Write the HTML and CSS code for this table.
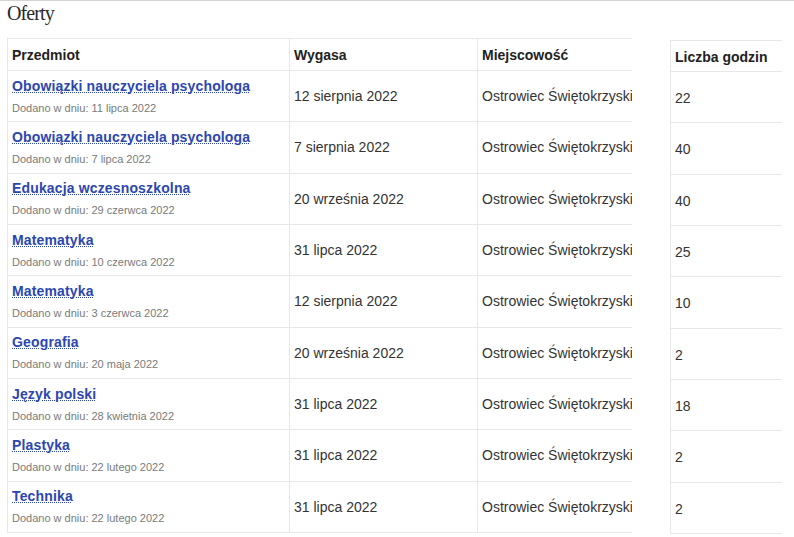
FILE: index.html
```html
<!DOCTYPE html>
<html lang="pl">
<head>
<meta charset="utf-8">
<title>Oferty</title>
<link rel="stylesheet" href="styles.css">
</head>
<body>
<div class="page">
  <h2 class="title">Oferty</h2>
  <div class="tables">
    <table class="offers">
      <thead>
        <tr><th class="c1">Przedmiot</th><th class="c2">Wygasa</th><th class="c3">Miejscowość</th></tr>
      </thead>
      <tbody>
        <tr><td><a href="#" class="subj">Obowiązki nauczyciela psychologa</a><span class="added">Dodano w dniu: 11 lipca 2022</span></td><td>12 sierpnia 2022</td><td>Ostrowiec Świętokrzyski</td></tr>
        <tr><td><a href="#" class="subj">Obowiązki nauczyciela psychologa</a><span class="added">Dodano w dniu: 7 lipca 2022</span></td><td>7 sierpnia 2022</td><td>Ostrowiec Świętokrzyski</td></tr>
        <tr><td><a href="#" class="subj">Edukacja wczesnoszkolna</a><span class="added">Dodano w dniu: 29 czerwca 2022</span></td><td>20 września 2022</td><td>Ostrowiec Świętokrzyski</td></tr>
        <tr><td><a href="#" class="subj">Matematyka</a><span class="added">Dodano w dniu: 10 czerwca 2022</span></td><td>31 lipca 2022</td><td>Ostrowiec Świętokrzyski</td></tr>
        <tr><td><a href="#" class="subj">Matematyka</a><span class="added">Dodano w dniu: 3 czerwca 2022</span></td><td>12 sierpnia 2022</td><td>Ostrowiec Świętokrzyski</td></tr>
        <tr><td><a href="#" class="subj">Geografia</a><span class="added">Dodano w dniu: 20 maja 2022</span></td><td>20 września 2022</td><td>Ostrowiec Świętokrzyski</td></tr>
        <tr><td><a href="#" class="subj">Język polski</a><span class="added">Dodano w dniu: 28 kwietnia 2022</span></td><td>31 lipca 2022</td><td>Ostrowiec Świętokrzyski</td></tr>
        <tr><td><a href="#" class="subj">Plastyka</a><span class="added">Dodano w dniu: 22 lutego 2022</span></td><td>31 lipca 2022</td><td>Ostrowiec Świętokrzyski</td></tr>
        <tr><td><a href="#" class="subj">Technika</a><span class="added">Dodano w dniu: 22 lutego 2022</span></td><td>31 lipca 2022</td><td>Ostrowiec Świętokrzyski</td></tr>
      </tbody>
    </table>
    <table class="hours">
      <thead>
        <tr><th>Liczba godzin</th></tr>
      </thead>
      <tbody>
        <tr><td>22</td></tr>
        <tr><td>40</td></tr>
        <tr><td>40</td></tr>
        <tr><td>25</td></tr>
        <tr><td>10</td></tr>
        <tr><td>2</td></tr>
        <tr><td>18</td></tr>
        <tr><td>2</td></tr>
        <tr><td>2</td></tr>
      </tbody>
    </table>
  </div>
</div>
</body>
</html>
```
FILE: styles.css
```css
html, body {
  margin: 0;
  padding: 0;
  background: #fff;
}

body {
  border-top: 1px solid #d4d4d4;
  font-family: "Liberation Sans", Arial, sans-serif;
  color: #333;
}

.page {
  padding-left: 7px;
}

.title {
  margin: 0 0 12px 0;
  font-family: "Liberation Serif", "Times New Roman", serif;
  font-weight: normal;
  font-size: 20px;
  letter-spacing: -0.9px;
  line-height: 25px;
  color: #2a2a2a;
}

.tables {
  display: flex;
  align-items: flex-start;
  gap: 38px;
}

table {
  border-collapse: separate;
  border-spacing: 0;
  table-layout: fixed;
  border-top: 1px solid #e8e8e8;
}

.offers {
  width: 625px;
}

.hours {
  width: 112px;
  margin-top: 2px;
}

th, td {
  box-sizing: border-box;
  border-left: 1px solid #e8e8e8;
  border-bottom: 1px solid #e8e8e8;
  padding: 0 4px;
  text-align: left;
  vertical-align: middle;
  white-space: nowrap;
  overflow: hidden;
}

th {
  height: 32px;
  font-size: 14px;
  font-weight: bold;
  color: #222;
  line-height: 18px;
}

.hours th {
  height: 31px;
  padding-top: 2px;
}

td {
  height: 51.33px;
  font-size: 14px;
  line-height: 18px;
  color: #333;
}

.hours td {
  padding-top: 2px;
}

.c1 { width: 282px; }
.c2 { width: 188px; }
.c3 { width: 155px; }

.subj {
  display: inline-block;
  font-weight: bold;
  font-size: 14px;
  line-height: 18px;
  color: #2c46b0;
  text-decoration: underline dotted;
  text-decoration-thickness: 1px;
  text-underline-offset: 1px;
  letter-spacing: 0.15px;
}

.added {
  display: block;
  margin-top: 5px;
  font-size: 11px;
  line-height: 16px;
  color: #7a7a7a;
}
```
